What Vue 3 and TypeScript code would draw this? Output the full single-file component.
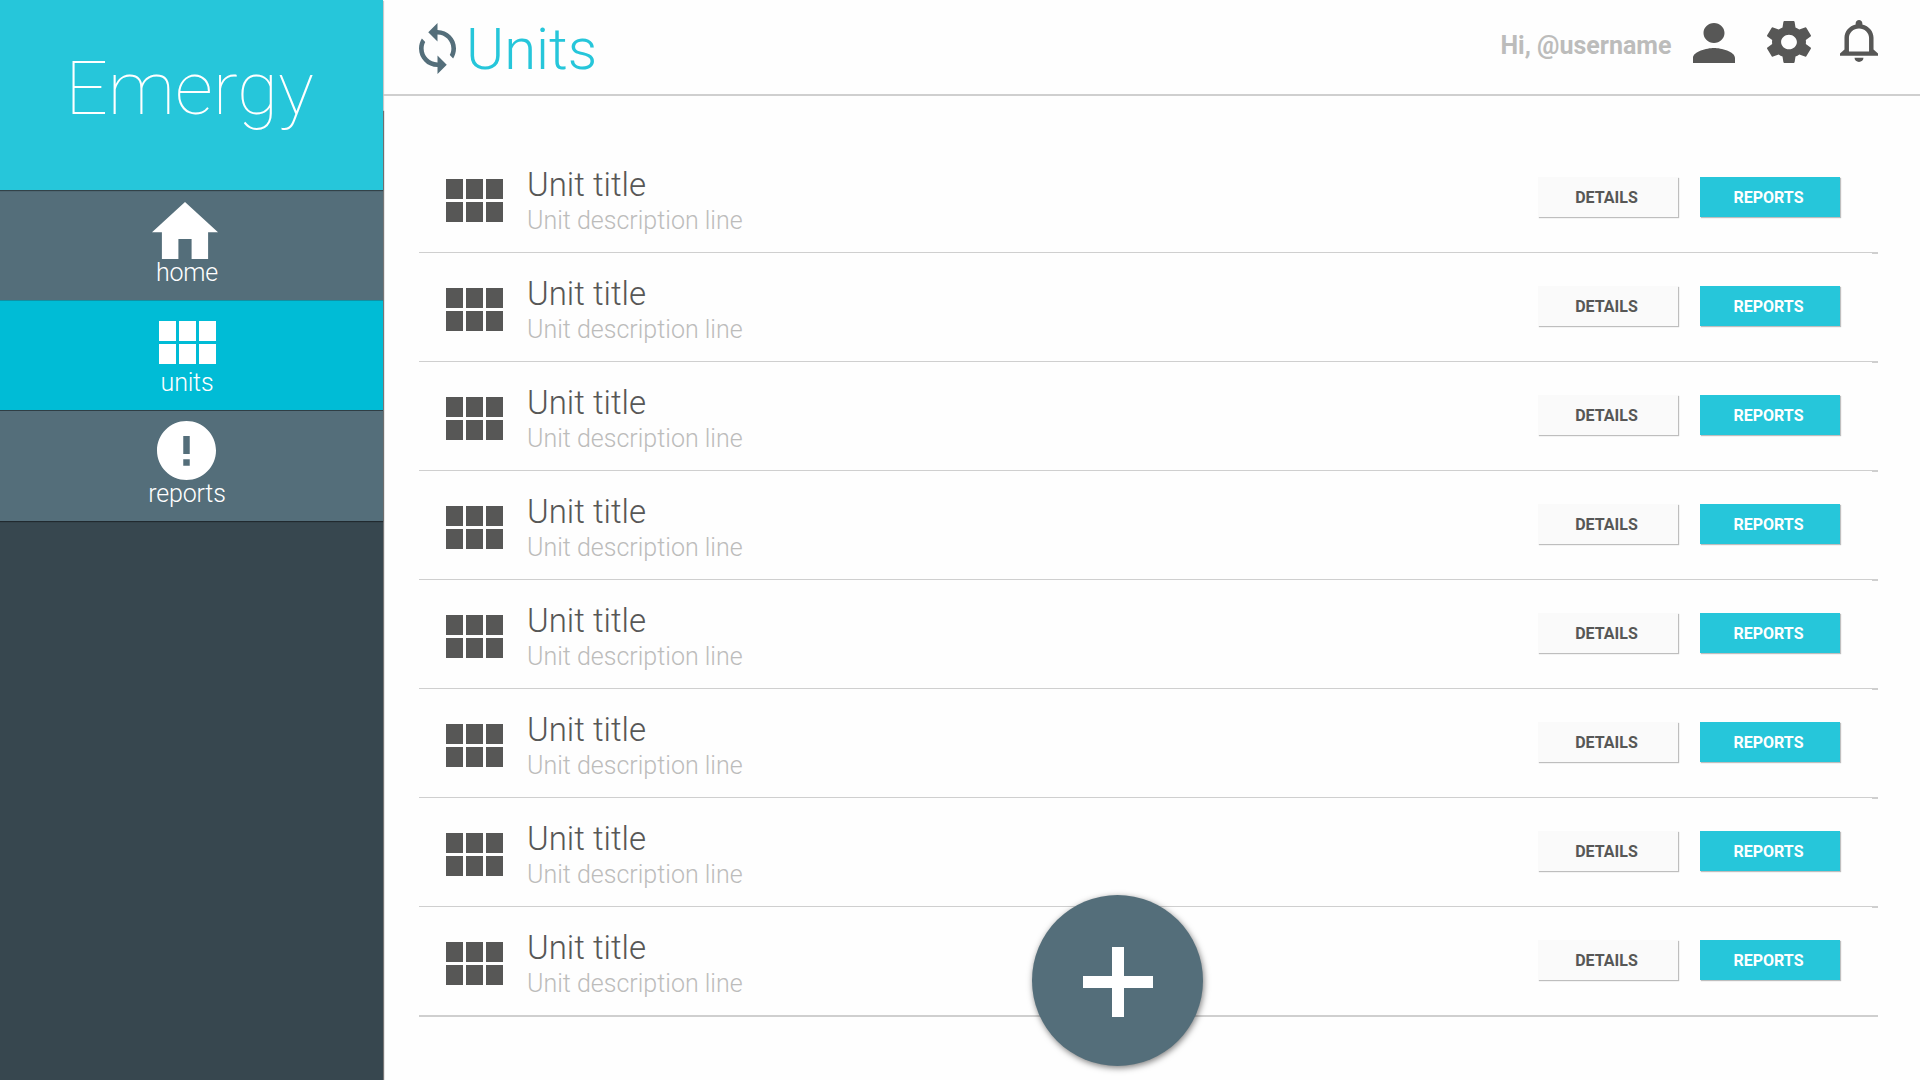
<script setup lang="ts">
interface NavItem {
  id: 'home' | 'units' | 'reports'
  label: string
  active?: boolean
}

interface Unit {
  id: number
  title: string
  description: string
}

const navItems: NavItem[] = [
  { id: 'home', label: 'home' },
  { id: 'units', label: 'units', active: true },
  { id: 'reports', label: 'reports' },
]

const units: Unit[] = Array.from({ length: 8 }, (_, i) => ({
  id: i + 1,
  title: 'Unit title',
  description: 'Unit description line',
}))
</script>

<template>
  <div class="app">
    <aside class="sidebar">
      <div class="brand"><span>Emergy</span></div>
      <nav>
        <a v-for="item in navItems" :key="item.id" class="nav-item" :class="[item.id, { active: item.active }]">
          <svg v-if="item.id === 'home'" class="nav-icon" width="66" height="57" viewBox="2 3 20 17" preserveAspectRatio="none">
            <path d="M10 20v-6h4v6h5v-8h3L12 3 2 12h3v8z" />
          </svg>
          <svg v-else-if="item.id === 'units'" class="nav-icon" width="57" height="43" viewBox="0 0 57 43">
            <path d="M0 0h17v20H0zM20 0h17v20H20zM40 0h17v20H40zM0 23h17v20H0zM20 23h17v20H20zM40 23h17v20H40z" />
          </svg>
          <svg v-else class="nav-icon" width="59" height="59" viewBox="2 2 20 20">
            <path d="M12 2C6.48 2 2 6.48 2 12s4.48 10 10 10 10-4.48 10-10S17.52 2 12 2zm1.1 15.2h-2.2V15h2.2zm0-4h-2.2V7.1h2.2z" />
          </svg>
          <span class="nav-label">{{ item.label }}</span>
        </a>
      </nav>
    </aside>

    <main class="main">
      <header class="header">
        <svg class="sync" width="37" height="51" viewBox="4 1 16 22" preserveAspectRatio="none">
          <path d="M12 4V1L8 5l4 4V6c3.31 0 6 2.69 6 6 0 1.01-.25 1.97-.7 2.8l1.46 1.46C19.54 15.03 20 13.57 20 12c0-4.42-3.58-8-8-8zm0 14c-3.31 0-6-2.69-6-6 0-1.01.25-1.97.7-2.8L5.24 7.74C4.46 8.97 4 10.43 4 12c0 4.42 3.58 8 8 8v3l4-4-4-4v3z" />
        </svg>
        <h1>Units</h1>
        <div class="account">
          <span class="greeting">Hi, @username</span>
          <svg class="person" width="42" height="40" viewBox="4 4 16 16" preserveAspectRatio="none">
            <path d="M12 12c2.21 0 4-1.79 4-4s-1.79-4-4-4-4 1.79-4 4 1.79 4 4 4zm0 2c-2.67 0-8 1.34-8 4v2h16v-2c0-2.66-5.33-4-8-4z" />
          </svg>
          <svg class="gear" width="44" height="42" viewBox="2.27 2 19.46 20" preserveAspectRatio="none">
            <path d="M19.43 12.98c.04-.32.07-.64.07-.98s-.03-.66-.07-.98l2.11-1.65c.19-.15.24-.42.12-.64l-2-3.46c-.12-.22-.39-.3-.61-.22l-2.49 1c-.52-.4-1.08-.73-1.69-.98l-.38-2.65C14.46 2.18 14.25 2 14 2h-4c-.25 0-.46.18-.49.42l-.38 2.65c-.61.25-1.17.59-1.69.98l-2.49-1c-.23-.09-.49 0-.61.22l-2 3.46c-.13.22-.07.49.12.64l2.11 1.65c-.04.32-.07.65-.07.98s.03.66.07.98l-2.11 1.65c-.19.15-.24.42-.12.64l2 3.46c.12.22.39.3.61.22l2.49-1c.52.4 1.08.73 1.69.98l.38 2.65c.03.24.24.42.49.42h4c.25 0 .46-.18.49-.42l.38-2.65c.61-.25 1.17-.59 1.69-.98l2.49 1c.23.09.49 0 .61-.22l2-3.46c.12-.22.07-.49-.12-.64l-2.11-1.65zM12 15.5c-1.93 0-3.5-1.57-3.5-3.5s1.57-3.5 3.5-3.5 3.5 1.57 3.5 3.5-1.57 3.5-3.5 3.5z" />
          </svg>
          <svg class="bell" width="38" height="42" viewBox="3 2 17 20" preserveAspectRatio="none">
            <path d="M11.5 22c1.1 0 2-.9 2-2h-4c0 1.1.9 2 2 2zm6.5-6v-5.5c0-3.07-2.13-5.64-5-6.32V3.5c0-.83-.67-1.5-1.5-1.5S10 2.67 10 3.5v.68c-2.87.68-5 3.25-5 6.32V16l-2 2v1h17v-1l-2-2zm-2 1H7v-6.5C7 8.01 9.01 6 11.5 6S16 8.01 16 10.5V17z" />
          </svg>
        </div>
      </header>

      <ul class="unit-list">
        <li v-for="unit in units" :key="unit.id" class="unit">
          <svg class="unit-icon" width="57" height="43" viewBox="0 0 57 43">
            <path d="M0 0h17v20H0zM20 0h17v20H20zM40 0h17v20H40zM0 23h17v20H0zM20 23h17v20H20zM40 23h17v20H40z" />
          </svg>
          <div class="unit-text">
            <div class="unit-title">{{ unit.title }}</div>
            <div class="unit-desc">{{ unit.description }}</div>
          </div>
          <button class="btn details" type="button">DETAILS</button>
          <button class="btn reports-btn" type="button">REPORTS</button>
        </li>
      </ul>
    </main>

    <button class="fab" type="button" aria-label="Add unit">
      <svg width="70" height="70" viewBox="0 0 70 70">
        <path d="M29 0h12v29h29v12H41v29H29V41H0V29h29z" />
      </svg>
    </button>
  </div>
</template>

<style>
body {
  margin: 0;
  background: #fefefe;
}
</style>

<style scoped>
.app {
  position: relative;
  display: flex;
  width: 1920px;
  height: 1080px;
  overflow: hidden;
  background: #fefefe;
  font-family: Roboto, 'Liberation Sans', sans-serif;
}

svg {
  display: block;
  flex: none;
}

.sidebar {
  flex: none;
  width: 383px;
  background: #37474f;
  box-shadow: 1px 111px 1px rgba(0, 0, 0, 0.45), 1px 1px 1px rgba(0, 0, 0, 0.15);
}

.brand {
  position: relative;
  box-sizing: border-box;
  height: 190px;
  padding: 0 4px 14px 0;
  display: flex;
  align-items: center;
  justify-content: center;
  background: #26c6da;
  color: #fff;
  font-size: 75px;
  font-weight: 100;
  letter-spacing: -0.1px;
  line-height: 90px;
  box-shadow: 0 1px 1px rgba(0, 0, 0, 0.4);
}

.nav-item {
  box-sizing: border-box;
  display: flex;
  flex-direction: column;
  align-items: center;
  height: 110px;
  padding-right: 8px;
  background: #546e7a;
  color: #fff;
}

.nav-item.home {
  padding-top: 12px;
}

.nav-item.home .nav-icon {
  margin-right: 5px;
}

.nav-item.home .nav-label {
  margin-top: 1px;
}

.nav-item.units {
  padding-top: 21px;
  background: #00bcd6;
  box-shadow: inset 0 1px 0 rgba(38, 80, 90, 0.4);
}

.nav-item.units .nav-label {
  margin-top: 6px;
}

.nav-item.reports {
  height: 111px;
  padding-top: 11px;
  box-shadow: inset 0 1px 0 rgba(38, 50, 56, 0.8), 0 1px 1px rgba(0, 0, 0, 0.4);
}

.nav-item.reports .nav-icon {
  margin-right: 2px;
}

.nav-item.reports .nav-label {
  margin-top: 1px;
}

.nav-icon {
  fill: #fff;
}

.nav-label {
  margin-right: 1px;
  font-size: 25px;
  font-weight: 300;
  letter-spacing: -0.2px;
  line-height: 26px;
}

.main {
  flex: 1;
  min-width: 0;
}

.header {
  box-sizing: border-box;
  display: flex;
  height: 96px;
  padding-left: 36px;
  border-bottom: 2px solid #cfcfcf;
}

.sync {
  margin-top: 23px;
  fill: #546e7a;
}

.header h1 {
  margin: 19px 0 0 10px;
  color: #26c6da;
  font-size: 58px;
  font-weight: 300;
  line-height: 60px;
}

.account {
  display: flex;
  margin-left: auto;
  padding-right: 42px;
  fill: #575756;
}

.greeting {
  margin: 31px 21.5px 0 0;
  color: #bcbcbb;
  font-size: 25px;
  font-weight: 700;
  line-height: 30px;
}

.person {
  margin-top: 23px;
}

.gear {
  margin: 21px 29px 0 32px;
}

.bell {
  margin-top: 20px;
}

.unit-list {
  margin: 48px 42px 0 36px;
  padding: 0;
  list-style: none;
}

.unit {
  position: relative;
  box-sizing: border-box;
  display: flex;
  height: 109px;
  padding: 0 38px 0 27px;
  border-bottom: 1px solid #cfcfcf;
}

/* Thickened right-hand end of every divider */
.unit::after {
  content: '';
  position: absolute;
  right: 0;
  bottom: -2px;
  width: 6px;
  height: 1px;
  background: #cfcfcf;
}

.unit:last-child {
  height: 110px;
  border-bottom-width: 2px;
}

.unit-icon {
  margin-top: 35px;
  fill: #575756;
}

.unit-text {
  margin: 20px auto 0 24px;
}

.unit-title {
  color: #575756;
  font-size: 33px;
  font-weight: 300;
  line-height: 42px;
}

.unit-desc {
  color: #bcbcbb;
  font-size: 25px;
  font-weight: 300;
  line-height: 29px;
}

.btn {
  box-sizing: border-box;
  width: 140px;
  height: 40px;
  margin: 33px 0 0;
  padding: 0 3px 0 0;
  border: 0;
  border-radius: 0;
  font-family: inherit;
  font-size: 16px;
  font-weight: 700;
  line-height: 42px;
  text-align: center;
  box-shadow: 1px 1px 1px rgba(0, 0, 0, 0.25);
}

.details {
  margin-right: 22px;
  background: #fafafa;
  color: #575756;
}

.reports-btn {
  background: #26c6da;
  color: #fff;
}

.fab {
  position: absolute;
  left: 1032px;
  top: 895px;
  display: flex;
  align-items: center;
  justify-content: center;
  width: 171px;
  height: 171px;
  padding: 3px 0 0 1px;
  border: 0;
  border-radius: 50%;
  background: #546e7a;
  box-shadow: 1px 2px 6px rgba(0, 0, 0, 0.5);
}

.fab svg {
  fill: #fff;
}
</style>
